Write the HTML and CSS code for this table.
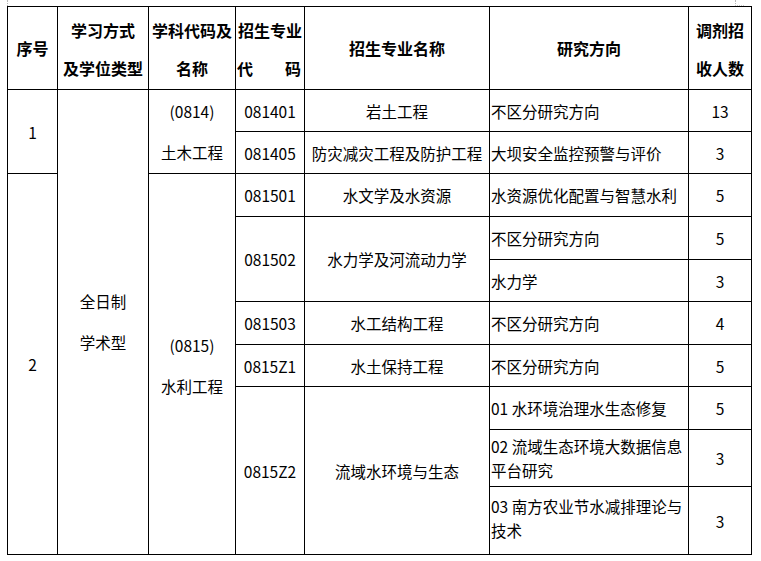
FILE: index.html
```html
<!DOCTYPE html>
<html lang="zh-CN">
<head>
<meta charset="utf-8">
<title>调剂招生专业表</title>
<link rel="stylesheet" href="styles.css">
</head>
<body>
<div class="page">
  <span class="mark mark-left"></span>
  <span class="mark mark-right"></span>
  <div class="sheet">
    <div class="cell head">序号</div>
    <div class="cell head two">学习方式<br>及学位类型</div>
    <div class="cell head two">学科代码及<br>名称</div>
    <div class="cell head two code-head"><span>招生专业</span><span class="just"><span>代</span><span>码</span></span></div>
    <div class="cell head">招生专业名称</div>
    <div class="cell head">研究方向</div>
    <div class="cell head two">调剂招<br>收人数</div>

    <div class="cell span2">1</div>
    <div class="cell span10 lines">全日制<br>学术型</div>
    <div class="cell span2 lines">(0814)<br>土木工程</div>
    <div class="cell">081401</div>
    <div class="cell">岩土工程</div>
    <div class="cell dir">不区分研究方向</div>
    <div class="cell">13</div>

    <div class="cell">081405</div>
    <div class="cell">防灾减灾工程及防护工程</div>
    <div class="cell dir">大坝安全监控预警与评价</div>
    <div class="cell">3</div>

    <div class="cell span8">2</div>
    <div class="cell span8 lines low">(0815)<br>水利工程</div>
    <div class="cell">081501</div>
    <div class="cell">水文学及水资源</div>
    <div class="cell dir">水资源优化配置与智慧水利</div>
    <div class="cell">5</div>

    <div class="cell span2">081502</div>
    <div class="cell span2">水力学及河流动力学</div>
    <div class="cell dir">不区分研究方向</div>
    <div class="cell">5</div>

    <div class="cell dir">水力学</div>
    <div class="cell">3</div>

    <div class="cell">081503</div>
    <div class="cell">水工结构工程</div>
    <div class="cell dir">不区分研究方向</div>
    <div class="cell">4</div>

    <div class="cell">0815Z1</div>
    <div class="cell">水土保持工程</div>
    <div class="cell dir">不区分研究方向</div>
    <div class="cell">5</div>

    <div class="cell span3">0815Z2</div>
    <div class="cell span3">流域水环境与生态</div>
    <div class="cell dir">01 水环境治理水生态修复</div>
    <div class="cell">5</div>

    <div class="cell dir wrap">02 流域生态环境大数据信息<br>平台研究</div>
    <div class="cell">3</div>

    <div class="cell dir wrap last">03 南方农业节水减排理论与<br>技术</div>
    <div class="cell">3</div>
  </div>
</div>
</body>
</html>
```

FILE: styles.css
```css
html, body {
  margin: 0;
  padding: 0;
  background: #fff;
}

body {
  font-family: "Noto Sans CJK SC", "Noto Sans", sans-serif;
  font-size: 15.5px;
  color: #000;
}

.page {
  position: relative;
  padding: 6px 0 0 7px;
}

.mark {
  position: absolute;
  top: 0;
  width: 0;
  height: 6px;
  border-left: 1px dotted #b8b8b8;
}

.mark-left {
  left: 7px;
}

.mark-right {
  left: 735px;
  width: 8px;
  height: 5px;
  border-bottom: 1px dotted #c8c8c8;
}

.sheet {
  display: grid;
  grid-template-columns: 49px 90px 86px 68px 184px 198px 62px;
  grid-template-rows: 82px 41px 41px 42px 42px 41px 42px 41px 42px 56px 67px;
  gap: 1px;
  width: max-content;
  background: #000;
  border: 1px solid #000;
}

.cell {
  background: #fff;
  display: flex;
  align-items: center;
  justify-content: center;
  text-align: center;
  line-height: 20px;
  white-space: nowrap;
}

.head {
  font-weight: bold;
  font-size: 16px;
}

.two {
  line-height: 38px;
  padding-top: 1px;
}

.code-head {
  flex-direction: column;
  align-items: stretch;
}

.just {
  display: flex;
  justify-content: space-between;
  padding: 0 3px 0 1px;
}

.lines {
  line-height: 41px;
}

.low {
  padding-top: 3px;
}

.dir {
  justify-content: flex-start;
  text-align: left;
  padding-left: 1px;
}

.wrap {
  line-height: 24px;
}

.last {
  padding-bottom: 6px;
}

.span2 { grid-row: span 2; }
.span3 { grid-row: span 3; }
.span8 { grid-row: span 8; }
.span10 { grid-row: span 10; }
```
